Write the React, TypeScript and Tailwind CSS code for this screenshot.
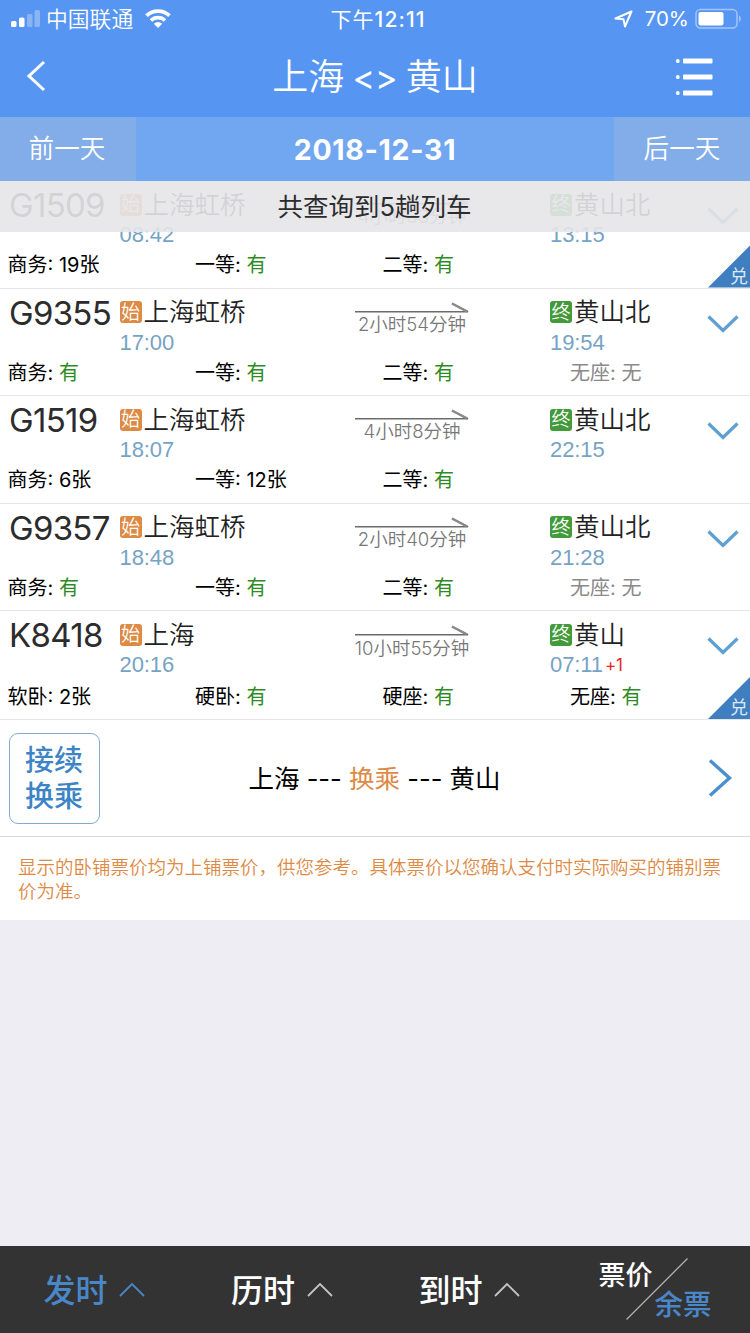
import React from "react"

type Seat = { label: string; value: string }

type Train = {
  no: string
  from: string
  depart: string
  to: string
  arrive: string
  plusDay?: string
  duration: string
  seats: Seat[]
  exchange?: boolean
}

const trains: Train[] = [
  {
    no: "G1509",
    from: "上海虹桥",
    depart: "08:42",
    to: "黄山北",
    arrive: "13:15",
    duration: "4小时33分钟",
    seats: [
      { label: "商务", value: "19张" },
      { label: "一等", value: "有" },
      { label: "二等", value: "有" },
    ],
    exchange: true,
  },
  {
    no: "G9355",
    from: "上海虹桥",
    depart: "17:00",
    to: "黄山北",
    arrive: "19:54",
    duration: "2小时54分钟",
    seats: [
      { label: "商务", value: "有" },
      { label: "一等", value: "有" },
      { label: "二等", value: "有" },
      { label: "无座", value: "无" },
    ],
  },
  {
    no: "G1519",
    from: "上海虹桥",
    depart: "18:07",
    to: "黄山北",
    arrive: "22:15",
    duration: "4小时8分钟",
    seats: [
      { label: "商务", value: "6张" },
      { label: "一等", value: "12张" },
      { label: "二等", value: "有" },
    ],
  },
  {
    no: "G9357",
    from: "上海虹桥",
    depart: "18:48",
    to: "黄山北",
    arrive: "21:28",
    duration: "2小时40分钟",
    seats: [
      { label: "商务", value: "有" },
      { label: "一等", value: "有" },
      { label: "二等", value: "有" },
      { label: "无座", value: "无" },
    ],
  },
  {
    no: "K8418",
    from: "上海",
    depart: "20:16",
    to: "黄山",
    arrive: "07:11",
    plusDay: "+1",
    duration: "10小时55分钟",
    seats: [
      { label: "软卧", value: "2张" },
      { label: "硬卧", value: "有" },
      { label: "硬座", value: "有" },
      { label: "无座", value: "有" },
    ],
    exchange: true,
  },
]

function StatusBar() {
  return (
    <div className="grid h-[38px] grid-cols-3 items-center text-white">
      <div className="flex items-center pl-[10px]">
        <svg width="31" height="20" viewBox="0 0 31 20" fill="currentColor">
          <rect x="1" y="12" width="5.5" height="6" rx="1.5" />
          <rect x="9" y="8.5" width="5.5" height="9.5" rx="1.5" />
          <rect x="17" y="5" width="5.5" height="13" rx="1.5" opacity="0.3" />
          <rect x="24.5" y="1" width="5.5" height="17" rx="1.5" opacity="0.3" />
        </svg>
        <span className="mt-[2px] ml-[5px] text-[21.8px] leading-none font-[350]">中国联通</span>
        <svg className="ml-[12px]" width="26" height="20" viewBox="0 0 26 20" fill="none" stroke="currentColor">
          <path d="M1.5 6.700a16.6 16.6 0 0 1 23 0" strokeWidth="3.8" />
          <path d="M6 11.5a10 10 0 0 1 14 0" strokeWidth="3.6" />
          <path d="M13 19l-4.2-4.2a6 6 0 0 1 8.4 0z" fill="currentColor" stroke="none" />
        </svg>
      </div>
      <div className="mt-[1px] pl-[6px] text-center text-[21px] leading-none tracking-[1.1px] whitespace-nowrap">
        下午<span className="font-medium">12:11</span>
      </div>
      <div className="flex items-center justify-end pr-[9px]">
        <svg width="19" height="18" viewBox="0 0 19 18" fill="none" stroke="currentColor" strokeWidth="2" strokeLinejoin="round">
          <path d="M17.5 1.500L1.500 8.500l8 .8L11 16.500z" />
        </svg>
        <span className="mt-[1px] ml-[12px] text-[20.5px] leading-none">70%</span>
        <svg className="mb-[1px] ml-[6px]" width="46" height="22" viewBox="0 0 46 22">
          <rect x="1" y="1.5" width="41" height="18.5" rx="4.5" fill="none" stroke="#fff" strokeOpacity="0.45" strokeWidth="1.5" />
          <rect x="3.5" y="4" width="25" height="13.5" rx="2" fill="#fff" />
          <path d="M44 7.500v6.500c1.200-.6 1.800-1.800 1.800-3.200s-.6-2.700-1.800-3.300z" fill="#fff" fillOpacity="0.45" />
        </svg>
      </div>
    </div>
  )
}

function NavBar() {
  return (
    <div className="flex h-[79px] items-center justify-between pr-[37px] pl-[26px] text-white">
      <svg className="mr-[20px] mb-[3px]" width="20" height="32" viewBox="0 0 20 32" fill="none" stroke="currentColor" strokeWidth="3">
        <path d="M18 2L3 16l15 14" />
      </svg>
      <h1 className="mb-[1px] ml-[9px] text-[36px] leading-none font-[350]">
        上海 <span className="mx-[-2px] text-[34px] font-normal">&lt;&gt;</span> 黄山
      </h1>
      <svg className="mb-[2px]" width="38" height="38" viewBox="0 0 38 38" fill="currentColor">
        <rect x="1" y="1" width="3.5" height="4" rx="1.500" />
        <rect x="8" y="0.500" width="29.5" height="5" rx="1" />
        <rect x="1" y="17" width="3.5" height="4" rx="1.500" />
        <rect x="8" y="16.5" width="29.5" height="5" rx="1" />
        <rect x="1" y="33" width="3.5" height="4" rx="1.500" />
        <rect x="8" y="32.5" width="29.5" height="5" rx="1" />
      </svg>
    </div>
  )
}

function DateBar() {
  return (
    <div className="flex h-[64px] bg-[#71a7f0] text-white">
      <button className="w-[136px] bg-[#82ade8] pt-[1px] pr-[2px] text-[25.6px] font-[350]">前一天</button>
      <div className="flex flex-1 items-center justify-center pt-[2px] text-[28.5px] font-bold tracking-[0.7px]">2018-12-31</div>
      <button className="w-[136px] bg-[#82ade8] pt-[1px] text-[25.6px] font-[350]">后一天</button>
    </div>
  )
}

type StationProps = {
  tag: string
  tagClass: string
  name: string
  time: string
  plusDay?: string
}

function Station({ tag, tagClass, name, time, plusDay }: StationProps) {
  return (
    <div className="pt-[9.5px]">
      <div className="flex h-[28px] items-center">
        <span className={`flex h-[22px] w-[22px] items-center justify-center rounded-[3px] text-[19px] leading-none font-[350] text-white ${tagClass}`}>
          {tag}
        </span>
        <span className="ml-[2px] text-[25.5px] leading-none font-[350] text-[#222]">{name}</span>
      </div>
      <div className="flex h-[33px] items-center font-['Liberation_Sans',sans-serif] text-[22px] leading-none tracking-[-0.1px] text-[#76a3c4]">
        {time}
        {plusDay && <span className="ml-[2px] font-[Inter,sans-serif] text-[17px] text-[#e8262a]">{plusDay}</span>}
      </div>
    </div>
  )
}

function seatColor(value: string) {
  if (value === "有") return "text-[#2e8b1f]"
  if (value === "无") return "text-[#8a8a8a]"
  return "text-black"
}

function TrainRow({ train, tall = false }: { train: Train; tall?: boolean }) {
  return (
    <div className={`relative border-b border-[#e6e6e9] bg-white ${tall ? "h-[109px]" : "h-[107.5px]"}`}>
      <div className="grid h-[70px] grid-cols-[119.5px_235.5px_195px_150px_50px]">
        <div className="pl-[9px] text-[33px] leading-[49px] tracking-[-0.7px] text-[#2c2c2c]">{train.no}</div>
        <Station tag="始" tagClass="bg-[#dd8a45]" name={train.from} time={train.depart} />
        <div className={`flex w-[114px] flex-col items-center ${tall ? "pt-[13px]" : "pt-[12px]"}`}>
          <svg className="shrink-0" width="114" height="12" viewBox="0 0 114 12" fill="none" stroke="#6b6b6b" strokeWidth="1.6">
            <path d="M0 10.7h113L97 2.5" strokeLinejoin="bevel" />
            <path d="M97 2.500l15 8" stroke="#8a8a8a" strokeWidth="2.400" />
          </svg>
          <span className={`text-[18.5px] leading-none font-[350] whitespace-nowrap text-[#777] ${tall ? "mt-[3px]" : "mt-[2px]"}`}>
            {train.duration}
          </span>
        </div>
        <Station tag="终" tagClass="bg-[#439a3b]" name={train.to} time={train.arrive} plusDay={train.plusDay} />
        <svg className="mt-[26px] ml-[7px]" width="32" height="18" viewBox="0 0 32 18" fill="none" stroke="#5f9fd2" strokeWidth="3.2">
          <path d="M1.5 1.5L16 15.5l14.5-14" />
        </svg>
      </div>
      <div className={`grid grid-cols-4 text-[20px] leading-[29px] ${tall ? "pt-[2px]" : ""}`}>
        {train.seats.map((seat) => (
          <div key={seat.label} className="pl-[7.5px]">
            <span className={seat.value === "无" ? "text-[#8a8a8a]" : "text-black"}>{seat.label}: </span>
            <span className={seatColor(seat.value)}>{seat.value}</span>
          </div>
        ))}
      </div>
      {train.exchange && (
        <div className="absolute right-0 bottom-0 flex h-[42px] w-[42px] items-end justify-end bg-[#3f7fc0] pr-[2px] pb-[2px] text-[18px] leading-none text-[#dce9f7] [clip-path:polygon(100%_0,100%_100%,0_100%)]">
          兑
        </div>
      )}
    </div>
  )
}

function TransferRow() {
  return (
    <div className="flex h-[117px] items-center justify-between border-b border-[#d8d8da] bg-white pr-[17px] pl-[9px]">
      <div className="flex h-[91px] w-[91px] flex-col items-center justify-center rounded-[9px] border border-[#84abcd] pt-[2px] pr-[1px] text-[29px] leading-[36px] font-medium text-[#3d84c6]">
        <span>接续</span>
        <span>换乘</span>
      </div>
      <div className="mt-[2px] mr-[59px] text-[25.5px] text-black">
        上海 --- <span className="text-[#dd8a45]">换乘</span> --- 黄山
      </div>
      <svg width="25" height="38" viewBox="0 0 25 38" fill="none" stroke="#4a90cc" strokeWidth="3.4">
        <path d="M2 1.5L21.5 19 2 36.5" />
      </svg>
    </div>
  )
}

function SortTab({ label, active = false }: { label: string; active?: boolean }) {
  return (
    <div className="flex w-[187.5px] items-center pl-[43.5px]">
      <span className={`mt-[2px] text-[32px] leading-none font-medium ${active ? "text-[#4a87c8]" : "text-white"}`}>{label}</span>
      <svg className="ml-[11.5px]" width="26" height="15" viewBox="0 0 26 15" fill="none" stroke={active ? "#4a87c8" : "#c4c4c4"} strokeWidth="1.8">
        <path d="M1 14L13 2l12 12" />
      </svg>
    </div>
  )
}

export default function App() {
  return (
    <div className="flex h-[1333px] w-[750px] flex-col overflow-hidden bg-[#eeedf3] font-[Inter,'Noto_Sans_CJK_SC',sans-serif]">
      <header className="bg-[#5695f2]">
        <StatusBar />
        <NavBar />
        <DateBar />
      </header>

      <main className="relative flex-1">
        {/* Result count floats over the scrolled list */}
        <div className="absolute inset-x-0 top-0 z-10 flex h-[51px] items-center justify-center bg-[#e6e6e9]/90 pt-[2px] pr-[1px] text-[25.5px] text-[#2c2c2e]">
          共查询到5趟列车
        </div>

        {trains.map((train, i) => (
          <TrainRow key={train.no} train={train} tall={i === trains.length - 1} />
        ))}

        <TransferRow />
        <p className="h-[83px] bg-white pt-[18px] pr-[20px] pl-[18px] text-[18.5px] leading-[24px] font-[350] text-[#dd8a45]">
          显示的卧铺票价均为上铺票价，供您参考。具体票价以您确认支付时实际购买的铺别票价为准。
        </p>
      </main>

      <footer className="flex h-[87px] bg-[#333333]">
        <SortTab label="发时" active />
        <SortTab label="历时" />
        <SortTab label="到时" />
        <div className="relative flex w-[187.5px] flex-col pt-[16px] pl-[36px] leading-none font-medium">
          <span className="text-[27px] text-white">票价</span>
          <span className="mt-[2px] pl-[56px] text-[28.5px] text-[#4a87c8]">余票</span>
          <svg className="absolute top-[12px] left-[63px]" width="62" height="62" viewBox="0 0 62 62" stroke="#b0b0b0" strokeWidth="1.3">
            <path d="M0.5 61.5L61.5 0.5" />
          </svg>
        </div>
      </footer>
    </div>
  )
}
